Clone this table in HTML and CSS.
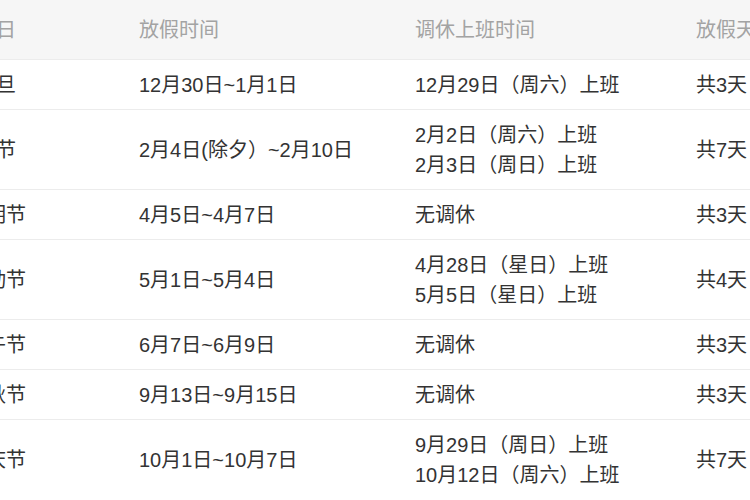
FILE: index.html
```html
<!DOCTYPE html>
<html lang="zh-CN">
<head>
<meta charset="utf-8">
<title>放假安排</title>
<link rel="stylesheet" href="styles.css">
</head>
<body>
<div class="viewport">
  <table class="holiday">
    <colgroup>
      <col class="c-name">
      <col class="c-off">
      <col class="c-work">
      <col class="c-days">
    </colgroup>
    <thead>
      <tr>
        <th class="name">节日</th>
        <th>放假时间</th>
        <th>调休上班时间</th>
        <th>放假天数</th>
      </tr>
    </thead>
    <tbody>
      <tr>
        <td class="name">元旦</td>
        <td>12月30日~1月1日</td>
        <td>12月29日（周六）上班</td>
        <td>共3天</td>
      </tr>
      <tr>
        <td class="name">春节</td>
        <td>2月4日(除夕）~2月10日</td>
        <td>2月2日（周六）上班<br>2月3日（周日）上班</td>
        <td>共7天</td>
      </tr>
      <tr>
        <td class="name">清明节</td>
        <td>4月5日~4月7日</td>
        <td>无调休</td>
        <td>共3天</td>
      </tr>
      <tr>
        <td class="name">劳动节</td>
        <td>5月1日~5月4日</td>
        <td>4月28日（星日）上班<br>5月5日（星日）上班</td>
        <td>共4天</td>
      </tr>
      <tr>
        <td class="name">端午节</td>
        <td>6月7日~6月9日</td>
        <td>无调休</td>
        <td>共3天</td>
      </tr>
      <tr>
        <td class="name">中秋节</td>
        <td>9月13日~9月15日</td>
        <td>无调休</td>
        <td>共3天</td>
      </tr>
      <tr>
        <td class="name">国庆节</td>
        <td>10月1日~10月7日</td>
        <td>9月29日（周日）上班<br>10月12日（周六）上班</td>
        <td>共7天</td>
      </tr>
    </tbody>
  </table>
</div>
</body>
</html>
```
FILE: styles.css
```css
html, body {
  margin: 0;
  padding: 0;
  background: #ffffff;
  overflow: hidden;
}

.viewport {
  width: 750px;
  height: 500px;
  overflow: hidden;
}

.holiday {
  margin-left: -123px;
  width: 945px;
  table-layout: fixed;
  border-collapse: collapse;
  font-family: "Liberation Sans", "Noto Sans CJK SC", sans-serif;
  font-size: 20px;
  line-height: 30px;
  color: #333333;
}

.c-name { width: 238px; }
.c-off { width: 276px; }
.c-work { width: 281px; }
.c-days { width: 150px; }

.holiday th {
  background: #f6f6f6;
  color: #a3a3a3;
  font-weight: normal;
  text-align: left;
  padding: 15px 24px 14px;
  white-space: nowrap;
}

.holiday td {
  padding: 10px 24px 9px;
  border-top: 1px solid #ececec;
  vertical-align: middle;
  white-space: nowrap;
}

.holiday .name {
  text-align: center;
}
```
